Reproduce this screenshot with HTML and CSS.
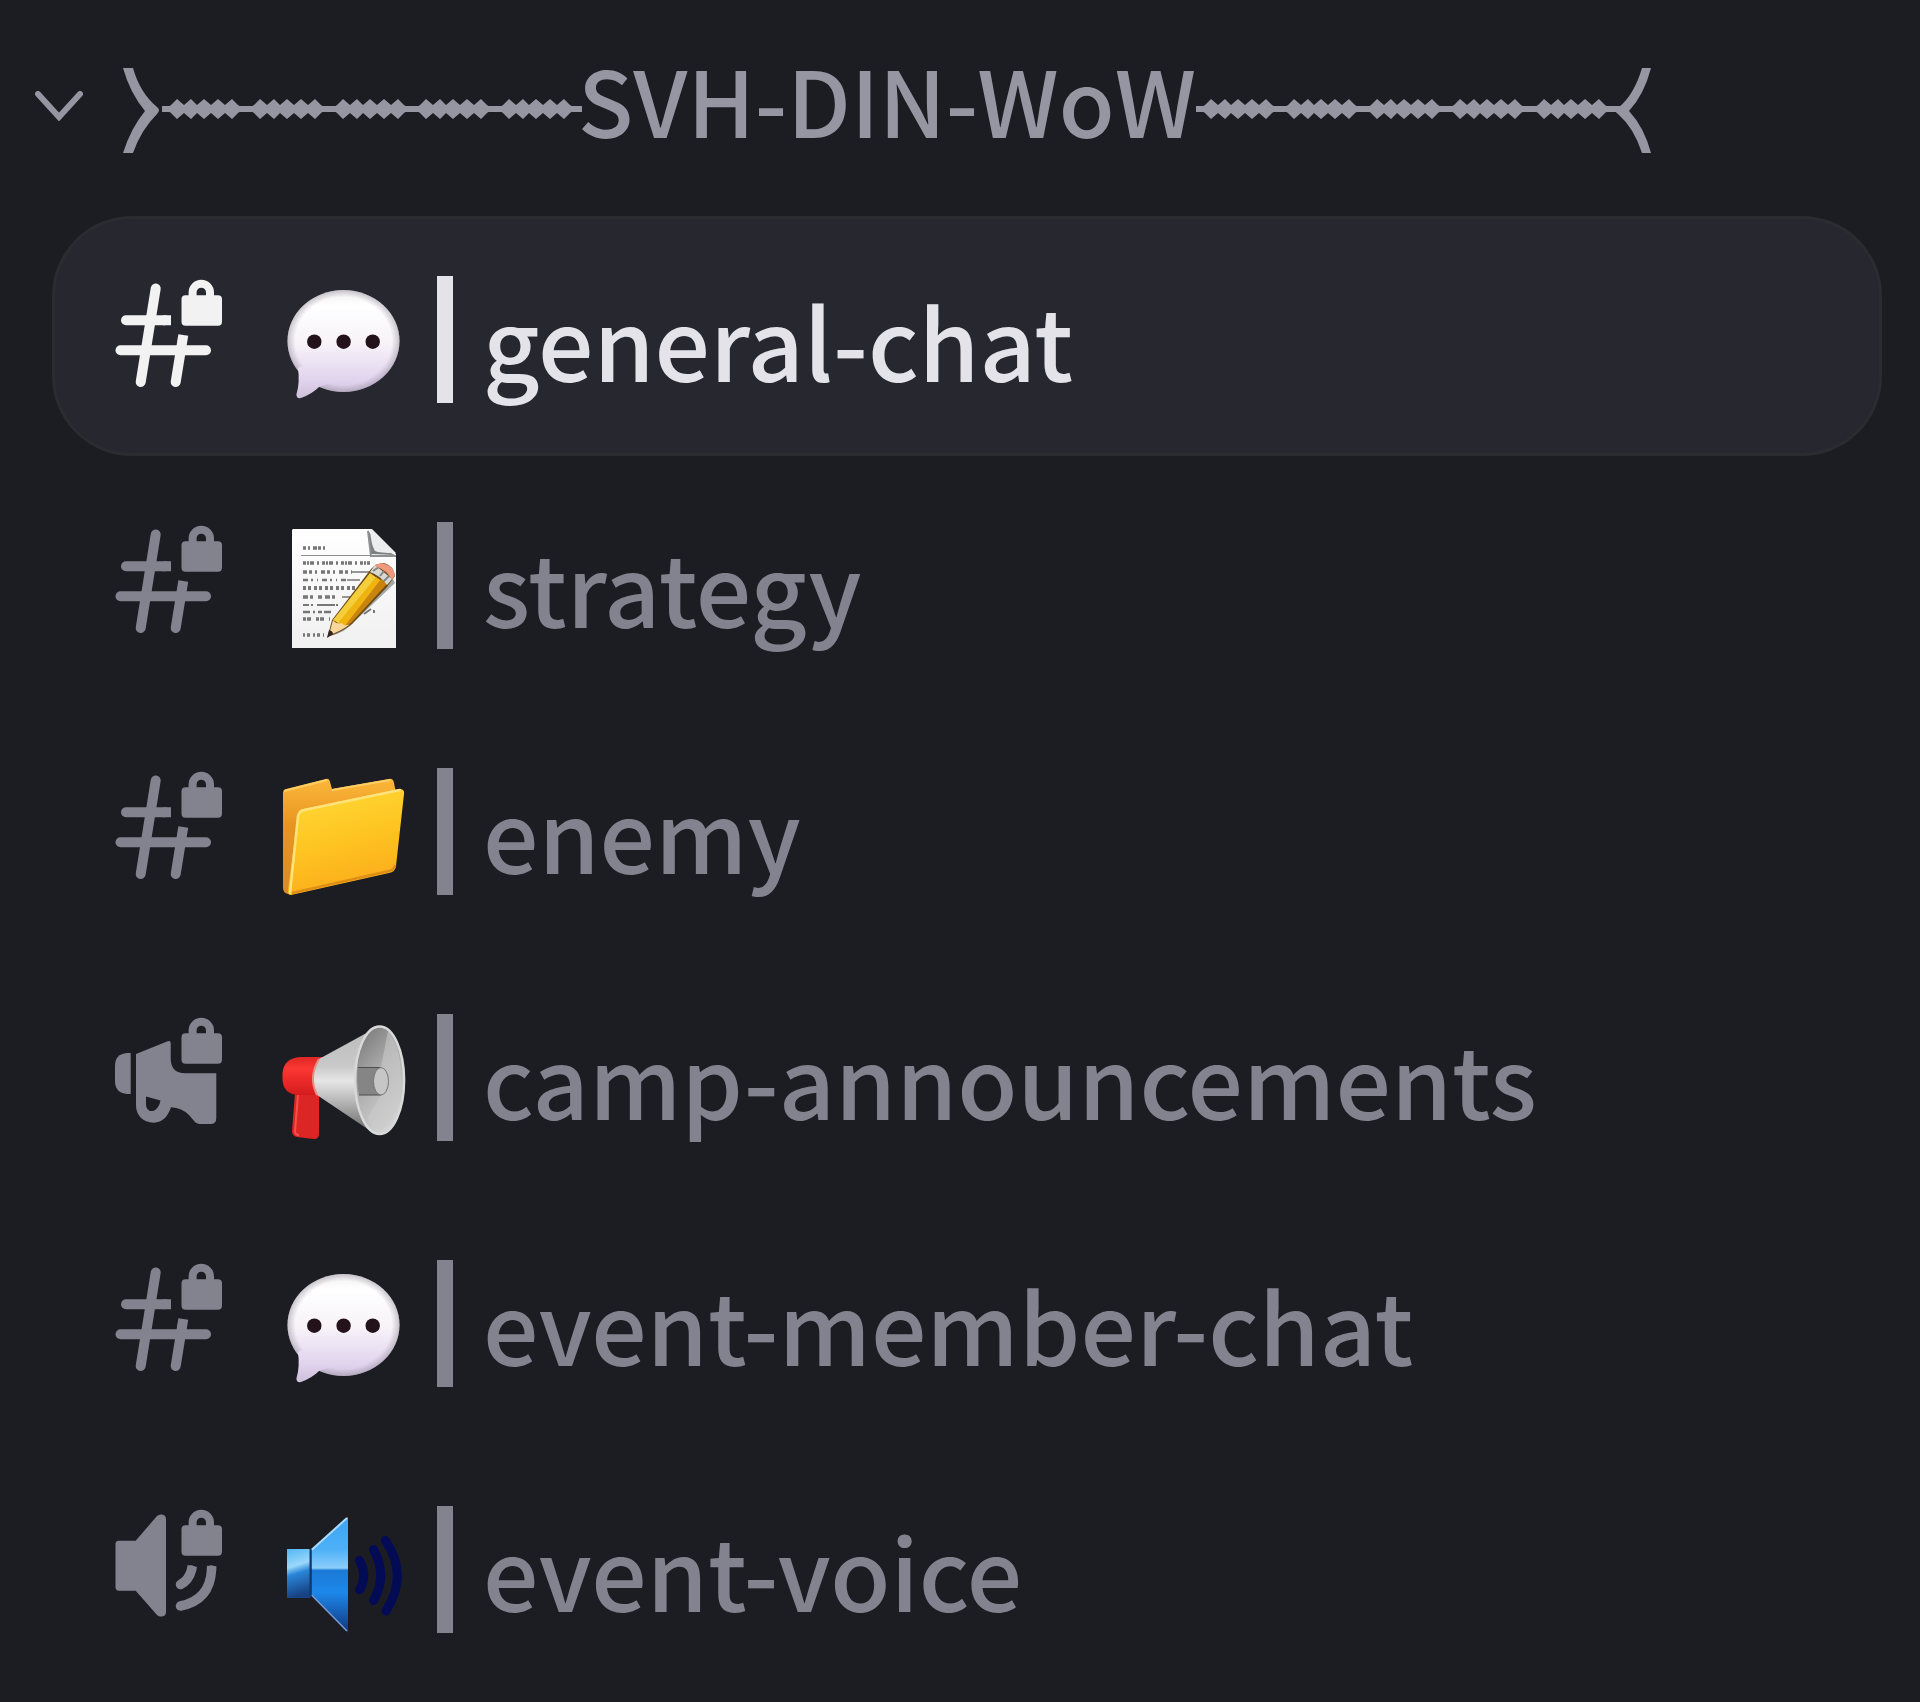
FILE: index.html
```html
<!DOCTYPE html>
<html lang="en">
<head>
  <meta charset="UTF-8">
  <meta name="viewport" content="width=device-width, initial-scale=1.0">
  <title>SVH-DIN-WoW</title>
  <link rel="stylesheet" href="styles.css">
</head>
<body>
  <!-- Shared shapes -->
  <svg class="defs" width="0" height="0" aria-hidden="true">
    <defs>
      <g id="beads">
        <path d="M-9 -2L-6 -4L0 -10L7 -4L14 -10L20 -4L27 -10L34 -4L41 -10L48 -4L55 -10L61 -4L64 -2V2L61 4L55 10L48 4L41 10L34 4L27 10L20 4L14 10L7 4L0 10L-6 4L-9 2Z"/>
      </g>
      <g id="lock">
        <path d="M77.600 18V13.400a8.700 8.700 0 0 1 17.400 0V18" fill="none" stroke="currentColor" stroke-width="8"/>
        <rect x="66.500" y="16.300" width="40.500" height="30.500" rx="4"/>
      </g>
      <g id="hash" fill="none" stroke="currentColor" stroke-width="10" stroke-linecap="round">
        <path d="M40.700 9.500L25.700 103"/>
        <path d="M11 41.300H50"/>
        <path d="M48 41.300H56M68.300 56L67 64" stroke-linecap="butt"/>
        <path d="M67 64L60.700 103"/>
        <path d="M5.500 71.300H91"/>
      </g>
      <linearGradient id="bubble-fill" gradientUnits="userSpaceOnUse" x1="0" y1="15" x2="0" y2="122">
        <stop offset="0" stop-color="#f3f2f4"/>
        <stop offset=".15" stop-color="#fff"/>
        <stop offset=".5" stop-color="#f7f3f8"/>
        <stop offset=".85" stop-color="#e0d3ee"/>
        <stop offset="1" stop-color="#cfc0db"/>
      </linearGradient>
      <radialGradient id="bubble-edge">
        <stop offset=".86" stop-color="#8c8494" stop-opacity="0"/>
        <stop offset="1" stop-color="#8c8494" stop-opacity=".45"/>
      </radialGradient>
      <g id="bubble">
        <ellipse cx="63.500" cy="66" rx="56" ry="51" fill="url(#bubble-fill)"/>
        <ellipse cx="63.500" cy="66" rx="56" ry="51" fill="url(#bubble-edge)"/>
        <path d="M18 93Q20 108 16.500 119Q16 124 21 123Q32 119 39 112L50 108L30 88Z" fill="url(#bubble-fill)"/>
        <g fill="#24121b"><circle cx="34.300" cy="66.700" r="7.200"/><circle cx="63.600" cy="66.700" r="7.200"/><circle cx="92.700" cy="66.700" r="7.200"/></g>
      </g>
    </defs>
  </svg>

  <nav class="channels" aria-label="Channels">
    <button class="category" type="button" aria-expanded="true">
      <svg class="chevron" viewBox="0 0 48 30" aria-hidden="true"><path d="M3 3L24 26L45 3"/></svg>
      <svg class="ornament ornament-left" viewBox="0 0 459 85" aria-hidden="true">
        <path d="M0 0H10Q17 25 34 39Q38 42 34 46Q18 62 10 85H0Q8 60 22 43Q7 25 0 0Z"/>
        <rect x="39" y="38" width="420" height="6"/>
        <use href="#beads" x="54" y="41"/><use href="#beads" x="137" y="41"/><use href="#beads" x="220" y="41"/><use href="#beads" x="303" y="41"/><use href="#beads" x="386" y="41"/>
      </svg>
      <span class="category-name">SVH-DIN-WoW</span>
      <svg class="ornament ornament-right" viewBox="0 0 455 85" aria-hidden="true">
        <path d="M455 0H446Q438 27 423 39Q417 43 422 46Q438 60 446 85H455Q448 59 433 43Q448 27 455 0Z"/>
        <rect x="0" y="38" width="424" height="6"/>
        <use href="#beads" x="15" y="41"/><use href="#beads" x="98" y="41"/><use href="#beads" x="181" y="41"/><use href="#beads" x="264" y="41"/><use href="#beads" x="348" y="41"/>
      </svg>
    </button>

    <ul class="channel-list">
      <li>
        <a class="channel active" href="#general-chat" aria-current="page">
          <svg class="type" viewBox="0 0 108 110" aria-hidden="true"><use href="#hash"/><use href="#lock"/></svg>
          <svg class="emoji" viewBox="0 0 128 128" aria-hidden="true"><use href="#bubble"/></svg>
          <span class="bar"></span>
          <span class="name">general-chat</span>
        </a>
      </li>
      <li>
        <a class="channel" href="#strategy">
          <svg class="type" viewBox="0 0 108 110" aria-hidden="true"><use href="#hash"/><use href="#lock"/></svg>
          <svg class="emoji" viewBox="0 0 128 128" aria-hidden="true">
            <defs>
              <linearGradient id="paper" x1="0" y1="0" x2="0" y2="1">
                <stop offset="0" stop-color="#fff"/><stop offset="1" stop-color="#f0f0f0"/>
              </linearGradient>
            </defs>
            <path d="M13 8H91L116 33V127H12V9Z" fill="url(#paper)"/>
            <path d="M88 9L91 33L115 34Q97 27 88 9Z" fill="#7d8080"/>
            <path d="M92 8L116 32Q99 32 95 30Q91 24 90 8Z" fill="#eceded"/>
            <path d="M88 10L91 35H116" fill="none" stroke="#8d9090" stroke-width="2"/>
            <path d="M21 34.500H90" stroke="#8f8f8f" stroke-width="1"/>
            <g fill="none" stroke="#777" stroke-width="3.400">
              <path d="M23 27H48" stroke-dasharray="3 2 2 3 4 1"/>
              <path d="M23 42H90" stroke-dasharray="3 1 2 1 4 3 2 3"/>
              <path d="M23 51H72" stroke-dasharray="4 2 3 3 2 4"/>
              <path d="M23 59H66" stroke-dasharray="5 3 2 4 1 4" stroke-width="2.400"/>
              <path d="M23 67H75" stroke-dasharray="3 2 3 3" stroke-width="4"/>
              <path d="M23 76H60" stroke-dasharray="5 2 3 5 4 3"/>
              <path d="M23 84H58" stroke-dasharray="6 2 2 4 18 1" stroke-width="2"/>
              <path d="M23 91H54" stroke-dasharray="7 3 2 3 4 2" stroke-width="2.400"/>
              <path d="M23 98H50" stroke-dasharray="3 1 4 5"/>
              <path d="M23 114H44" stroke-dasharray="2 2 3 3"/>
              <path d="M72 51H90M67 59H80M62 76H70" stroke-width="1.400"/>
              <path d="M84 93L91 88M94 89V92" stroke-width="2"/>
            </g>
            <path d="M50 115Q65 112 75 100L115 62L112 56L73 94Z" fill="#a5a7a7"/>
            <path d="M47.500 116L52 99L91 48Q96 42 104 42Q114 45 115 55L107 66L72 103Q62 111 47.500 116Z" fill="#6b4a16"/>
            <path d="M53 99L90 52L97 57L61 106Q58 101 53 99Z" fill="#f5cf3b"/>
            <path d="M58 102L96 56L102 60L66 106Z" fill="#f0b411"/>
            <path d="M64 106L101 58L107 63L71 102Z" fill="#c9840e"/>
            <path d="M49 114L53 99Q57 104 62 102Q64 106 70 103Q62 110 49 114Z" fill="#f6d69b"/>
            <path d="M47 117L49 109Q53 110 53 113Z" fill="#322421"/>
            <path d="M90 51L95 44L112 58L107 64Q101 55 90 51Z" fill="#d8d9d7"/>
            <path d="M93 50L99 46M100 55L104 50M104 60L109 55" stroke="#84847f" stroke-width="2"/>
            <path d="M95 45Q99 41 105 43Q114 46 115 54L112 59Q107 49 95 45Z" fill="#ef9a7d"/>
          </svg>
          <span class="bar"></span>
          <span class="name">strategy</span>
        </a>
      </li>
      <li>
        <a class="channel" href="#enemy">
          <svg class="type" viewBox="0 0 108 110" aria-hidden="true"><use href="#hash"/><use href="#lock"/></svg>
          <svg class="emoji" viewBox="0 0 128 128" aria-hidden="true">
            <defs>
              <linearGradient id="folder-front" x1="0" y1="0" x2=".3" y2="1">
                <stop offset="0" stop-color="#ffdc38"/><stop offset=".55" stop-color="#fec522"/><stop offset="1" stop-color="#fcae1b"/>
              </linearGradient>
              <linearGradient id="folder-back" x1="0" y1="0" x2="0" y2="1">
                <stop offset="0" stop-color="#fcb73a"/><stop offset=".4" stop-color="#e79520"/><stop offset="1" stop-color="#d98a2b"/>
              </linearGradient>
            </defs>
            <path d="M3 26Q3 23 6 22L46 12Q49 11 50 15L52 22L109 12Q113 11 114 16L116 26L14 127H8Q3 126 3 121Z" fill="url(#folder-back)"/>
            <path d="M4 24L47 13M52 23L110 13" stroke="#ffcf66" stroke-width="2"/>
            <path d="M18 48Q19 43 24 42L119 22Q125 22 124 27L116 99Q115 105 109 106L11 128Q7 128 8 123Z" fill="url(#folder-front)"/>
            <path d="M10 126L18 49Q19 44 24 43L120 23" fill="none" stroke="#ffe37a" stroke-width="2.500" stroke-linecap="round"/>
            <path d="M12 126L109 104Q114 103 115 98" fill="none" stroke="#e08f16" stroke-width="2.500"/>
          </svg>
          <span class="bar"></span>
          <span class="name">enemy</span>
        </a>
      </li>
      <li>
        <a class="channel" href="#camp-announcements">
          <svg class="type" viewBox="0 0 108 110" aria-hidden="true">
            <path d="M15.700 36V77H12Q0 76 0 64V49Q0 37 12 36Z"/>
            <path fill-rule="evenodd" d="M21 37L52 24.500Q55.700 23 55.700 26V42Q56 56 70 56.300H101.300V101Q101.300 107 95.500 107H85Q82 107 80 105L74 98Q67 91 56 90.300C53 99 48 105.700 38.500 105.700C28 105.700 21 98 21 88.500ZM31 79.500V87C31 97 43 97 45.500 83.500Z"/>
            <use href="#lock"/>
          </svg>
          <svg class="emoji" viewBox="0 0 128 128" aria-hidden="true">
            <defs>
              <linearGradient id="cone" x1="0" y1="0" x2="0" y2="1">
                <stop offset="0" stop-color="#bbb"/><stop offset=".35" stop-color="#c9c9c9"/><stop offset=".5" stop-color="#e6e6e6"/><stop offset=".75" stop-color="#aaa"/><stop offset="1" stop-color="#686868"/>
              </linearGradient>
              <linearGradient id="mouth" x1="0" y1="0" x2=".5" y2="1">
                <stop offset="0" stop-color="#707070"/><stop offset=".5" stop-color="#aaa"/><stop offset="1" stop-color="#d2d2d2"/>
              </linearGradient>
              <linearGradient id="grip" x1="0" y1="0" x2="0" y2="1">
                <stop offset="0" stop-color="#dd2724"/><stop offset=".3" stop-color="#fb3733"/><stop offset="1" stop-color="#d51b1c"/>
              </linearGradient>
            </defs>
            <path d="M15 80H39V121Q39 126 34 126L17 124Q12 123 12 118Z" fill="#dc2525"/>
            <path d="M18 82L15 118Q15 122 19 122" fill="none" stroke="#f5504a" stroke-width="2"/>
            <path d="M42 44V82H18Q3 81 2.500 66V60Q4 45 20 44Z" fill="url(#grip)"/>
            <path d="M39 46Q28 64 37 82L92 119V17Z" fill="url(#cone)"/>
            <path d="M39 46Q28 64 37 82" fill="none" stroke="#e98d83" stroke-width="2"/>
            <ellipse cx="99.600" cy="67.200" rx="24.500" ry="53.700" fill="url(#mouth)" stroke="#d9d9d9" stroke-width="2.500"/>
            <path d="M108 18Q121 32 121 68Q120 100 106 114Q96 121 87 105L101 82V54Z" fill="#c9c9c9" opacity=".6"/>
            <path d="M78 54.500H101V82H79Q76 68 78 54.500Z" fill="#858585"/>
            <path d="M78 54.500H101M79 82H101" stroke="#4d4d4d"/>
            <ellipse cx="101" cy="68.300" rx="7.500" ry="13.700" fill="#c6c6c6" stroke="#777"/>
          </svg>
          <span class="bar"></span>
          <span class="name">camp-announcements</span>
        </a>
      </li>
      <li>
        <a class="channel" href="#event-member-chat">
          <svg class="type" viewBox="0 0 108 110" aria-hidden="true"><use href="#hash"/><use href="#lock"/></svg>
          <svg class="emoji" viewBox="0 0 128 128" aria-hidden="true"><use href="#bubble"/></svg>
          <span class="bar"></span>
          <span class="name">event-member-chat</span>
        </a>
      </li>
      <li>
        <a class="channel" href="#event-voice">
          <svg class="type" viewBox="0 0 108 110" aria-hidden="true">
            <path d="M4 31.700H20.700L42 7Q44 5 47 5.500Q51 6 51 10V103Q51 107 47 107.500Q44 108 42 106L20.700 81.700H4Q.5 81.700 .5 78V35Q.5 31.700 4 31.700Z"/>
            <path d="M76.500 61Q74 71 65.500 75.500M96.500 61Q95 91 65.500 97" fill="none" stroke="currentColor" stroke-width="9.500" stroke-linecap="round"/>
            <path d="M77.300 57L76.500 61M96.700 57L96.500 61" fill="none" stroke="currentColor" stroke-width="9.500"/>
            <use href="#lock"/>
          </svg>
          <svg class="emoji" viewBox="0 0 128 128" aria-hidden="true">
            <defs>
              <linearGradient id="horn" x1="0" y1="0" x2="0" y2="1">
                <stop offset="0" stop-color="#3ba3f4"/><stop offset=".28" stop-color="#4eb1f7"/><stop offset=".44" stop-color="#8ccdfa"/><stop offset=".46" stop-color="#1b79d6"/><stop offset=".65" stop-color="#1d88ea"/><stop offset="1" stop-color="#11347d"/>
              </linearGradient>
              <linearGradient id="magnet" x1="0" y1="0" x2=".15" y2="1">
                <stop offset="0" stop-color="#51b6f5"/><stop offset=".38" stop-color="#9bd8fb"/><stop offset=".55" stop-color="#2a86d8"/><stop offset="1" stop-color="#174384"/>
              </linearGradient>
            </defs>
            <rect x="7" y="44" width="23.500" height="49" fill="url(#magnet)"/>
            <path d="M31.500 45L68 12V128L31.500 90Z" fill="url(#horn)"/>
            <path d="M31.500 45L67 13" stroke="#a8dcff" stroke-width="2"/>
            <path d="M31.500 90L67 126" stroke="#7b9bd0" stroke-width="1.500"/>
            <path d="M30.500 44V92" stroke="#10396f" stroke-width="2"/>
            <path d="M79.500 55.500Q88 71 79.500 85M93.500 44.500Q108 71 93.500 95.500M105.500 35.500Q129 70 106 106" fill="none" stroke="#030b55" stroke-width="9" stroke-linecap="round"/>
          </svg>
          <span class="bar"></span>
          <span class="name">event-voice</span>
        </a>
      </li>
    </ul>
  </nav>
</body>
</html>
```

FILE: styles.css
```css
* {
  box-sizing: border-box;
}
body {
  margin: 0;
  background-color: #1c1d22;
  color: #82838f;
  font-family: "Noto Sans CJK JP", "Open Sans", sans-serif;
  font-weight: 500;
}
svg {
  display: block;
  flex: none;
  fill: currentColor;
}
.defs {
  position: absolute;
}
.category {
  display: flex;
  align-items: center;
  width: 100%;
  height: 216px;
  padding: 0 35px;
  border: none;
  background: none;
  color: #9696a2;
  font-family: inherit;
  font-size: 91px;
  font-weight: 500;
  line-height: 120px;
  white-space: nowrap;
  cursor: pointer;
}
.chevron {
  width: 48px;
  height: 30px;
  margin-right: 40px;
  margin-bottom: 4px;
  fill: none;
  stroke: currentColor;
  stroke-width: 6;
  stroke-linecap: round;
}
.ornament {
  height: 85px;
  margin-top: 4px;
}
.ornament-left {
  width: 459px;
}
.ornament-right {
  width: 455px;
}
.category-name {
  margin-left: -4px;
  margin-bottom: 20px;
}
.channel-list {
  display: flex;
  flex-direction: column;
  gap: 6px;
  margin: 0;
  padding: 0 38px 0 52px;
  list-style: none;
}
.channel {
  display: flex;
  align-items: center;
  height: 240px;
  padding: 6px 60px 0;
  border: 3px solid transparent;
  border-radius: 80px;
  color: inherit;
  font-size: 98px;
  line-height: 120px;
  text-decoration: none;
  white-space: nowrap;
}
.channel.active {
  border-color: #2b2c31;
  background-color: #27272f;
  color: #e4e3e9;
}
.type {
  width: 108px;
  height: 110px;
  margin-right: 57px;
  margin-bottom: 10px;
}
.active .type {
  color: #f2f2f2;
}
.emoji {
  width: 128px;
  height: 128px;
  margin-right: 29px;
}
.bar {
  width: 16px;
  height: 127px;
  margin-right: 30px;
  background-color: currentColor;
}
```
